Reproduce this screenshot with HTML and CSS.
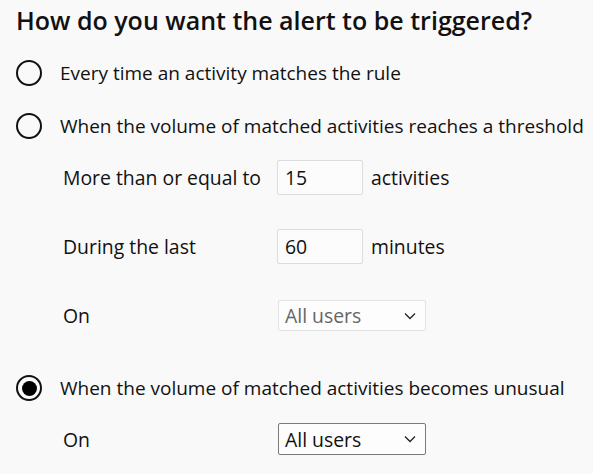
FILE: index.html
```html
<!DOCTYPE html>
<html>
<head>
<meta charset="utf-8">
<link rel="stylesheet" href="styles.css">
</head>
<body>
<div class="page">
  <h1 class="title">How do you want the alert to be triggered?</h1>
  <div class="option">
    <span class="radio"></span>
    <span class="label">Every time an activity matches the rule</span>
  </div>
  <div class="option">
    <span class="radio"></span>
    <span class="label">When the volume of matched activities reaches a threshold</span>
  </div>
  <div class="fields">
    <div class="field">
      <span class="flabel">More than or equal to</span>
      <span class="input">15</span>
      <span class="unit">activities</span>
    </div>
    <div class="field">
      <span class="flabel">During the last</span>
      <span class="input">60</span>
      <span class="unit">minutes</span>
    </div>
    <div class="field">
      <span class="flabel">On</span>
      <span class="select disabled">All users
        <svg class="chev" viewBox="0 0 12 8" width="12" height="8"><path d="M1 1.5 L6 6.5 L11 1.5" fill="none" stroke="currentColor" stroke-width="1.3"/></svg>
      </span>
    </div>
  </div>
  <div class="option checked">
    <span class="radio"><span class="dot"></span></span>
    <span class="label">When the volume of matched activities becomes unusual</span>
  </div>
  <div class="fields last">
    <div class="field">
      <span class="flabel">On</span>
      <span class="select">All users
        <svg class="chev" viewBox="0 0 12 8" width="12" height="8"><path d="M1 1.5 L6 6.5 L11 1.5" fill="none" stroke="currentColor" stroke-width="1.3"/></svg>
      </span>
    </div>
  </div>
</div>
</body>
</html>
```
FILE: styles.css
```css
html, body {
  margin: 0;
  padding: 0;
  background: #f9f9fa;
}
body {
  font-family: "Open Sans", "Noto Sans", sans-serif;
  color: #111;
}
.page {
  width: 593px;
  height: 474px;
  padding: 5px 0 0 16px;
  box-sizing: border-box;
  overflow: hidden;
}
.title {
  margin: 0;
  font-size: 25px;
  font-weight: 600;
  line-height: 30px;
}
.option {
  display: flex;
  align-items: center;
  height: 26px;
  margin-top: 25px;
}
.option + .option { margin-top: 27px; }
.radio {
  width: 22px;
  height: 22px;
  border: 2px solid #111;
  border-radius: 50%;
  display: flex;
  align-items: center;
  justify-content: center;
  flex: none;
}
.dot {
  width: 15px;
  height: 15px;
  border-radius: 50%;
  background: #000;
}
.label {
  margin-left: 18px;
  font-size: 19px;
  white-space: nowrap;
}
.fields {
  margin-left: 47px;
  display: flex;
  flex-direction: column;
}
.field {
  display: flex;
  align-items: center;
  font-size: 19.4px;
  white-space: nowrap;
}
.fields .field:nth-child(1) { margin-top: 21px; height: 35px; }
.fields .field:nth-child(2) { margin-top: 34px; height: 35px; }
.fields .field:nth-child(3) { margin-top: 36px; height: 31px; }
.flabel {
  width: 214px;
  flex: none;
}
.input {
  width: 86px;
  height: 35px;
  box-sizing: border-box;
  border: 1px solid #dcdcdc;
  border-radius: 2px;
  background: #fcfcfc;
  padding-left: 7px;
  display: flex;
  align-items: center;
}
.unit {
  margin-left: 8px;
}
.select {
  width: 148px;
  height: 32px;
  box-sizing: border-box;
  border: 1px solid #7a7a7a;
  border-radius: 2px;
  background: #fdfdfd;
  padding: 0 9px 0 6px;
  display: flex;
  align-items: center;
  justify-content: space-between;
  margin-left: 1px;
}
.select.disabled {
  height: 31px;
  border-color: #e2e2e2;
  color: #666;
}
.chev { color: #222; }
.checked { margin-top: 44px; }
.fields.last .field { margin-top: 22px; height: 32px; }
```
